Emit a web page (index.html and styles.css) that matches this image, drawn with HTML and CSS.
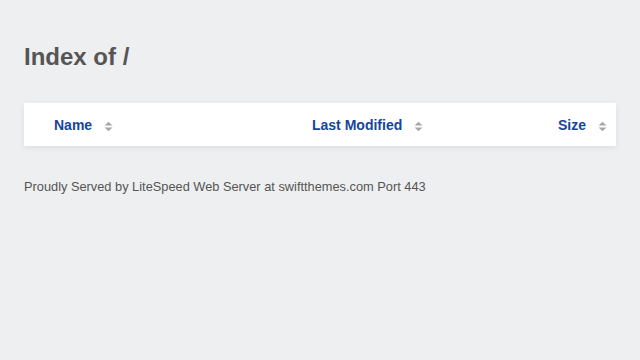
FILE: index.html
```html
<!DOCTYPE html>
<html>
<head>
<meta charset="utf-8">
<title>Index of /</title>
<link rel="stylesheet" href="styles.css">
</head>
<body>
<h1 class="title">Index of /</h1>
<table class="listing">
  <colgroup>
    <col class="c-name">
    <col class="c-mod">
    <col class="c-size">
  </colgroup>
  <thead>
    <tr>
      <th class="h-name"><a href="#">Name</a><svg class="sort" width="9" height="11" viewBox="0 0 9 11"><path d="M0.5 4.5 L4.5 0.8 L8.5 4.5 Z M0.5 6.5 L8.5 6.5 L4.5 10.2 Z" fill="#a8a8a8"/></svg></th>
      <th class="h-mod"><a href="#">Last Modified</a><svg class="sort" width="9" height="11" viewBox="0 0 9 11"><path d="M0.5 4.5 L4.5 0.8 L8.5 4.5 Z M0.5 6.5 L8.5 6.5 L4.5 10.2 Z" fill="#a8a8a8"/></svg></th>
      <th class="h-size"><a href="#">Size</a><svg class="sort" width="9" height="11" viewBox="0 0 9 11"><path d="M0.5 4.5 L4.5 0.8 L8.5 4.5 Z M0.5 6.5 L8.5 6.5 L4.5 10.2 Z" fill="#a8a8a8"/></svg></th>
    </tr>
  </thead>
</table>
<p class="footer">Proudly Served by LiteSpeed Web Server at swiftthemes.com Port 443</p>
</body>
</html>
```
FILE: styles.css
```css
html, body {
  margin: 0;
  background: #eeeff0;
}
body {
  padding: 43px 24px 0;
  font-family: "Liberation Sans", Arial, sans-serif;
  color: #555;
}
.title {
  margin: 0;
  font-size: 24px;
  line-height: 28px;
  font-weight: bold;
  color: #555;
}
.listing {
  margin-top: 32px;
  width: 100%;
  border-collapse: collapse;
  background: #fff;
  box-shadow: 0 2px 6px rgba(0, 0, 0, 0.07);
}
.c-name { width: 258px; }
.c-mod { width: 188px; }
.listing th {
  height: 43px;
  padding: 0 9px 0 30px;
  font-size: 14px;
  font-weight: bold;
  text-align: left;
  white-space: nowrap;
  vertical-align: middle;
}
.listing th.h-size {
  text-align: right;
}
.listing th a {
  color: #15459a;
  text-decoration: none;
}
.sort {
  display: inline-block;
  vertical-align: middle;
  margin-left: 12px;
  position: relative;
  top: 1px;
}
.footer {
  margin: 33px 0 0;
  font-size: 12.8px;
  line-height: 16px;
  color: #555;
}
```
